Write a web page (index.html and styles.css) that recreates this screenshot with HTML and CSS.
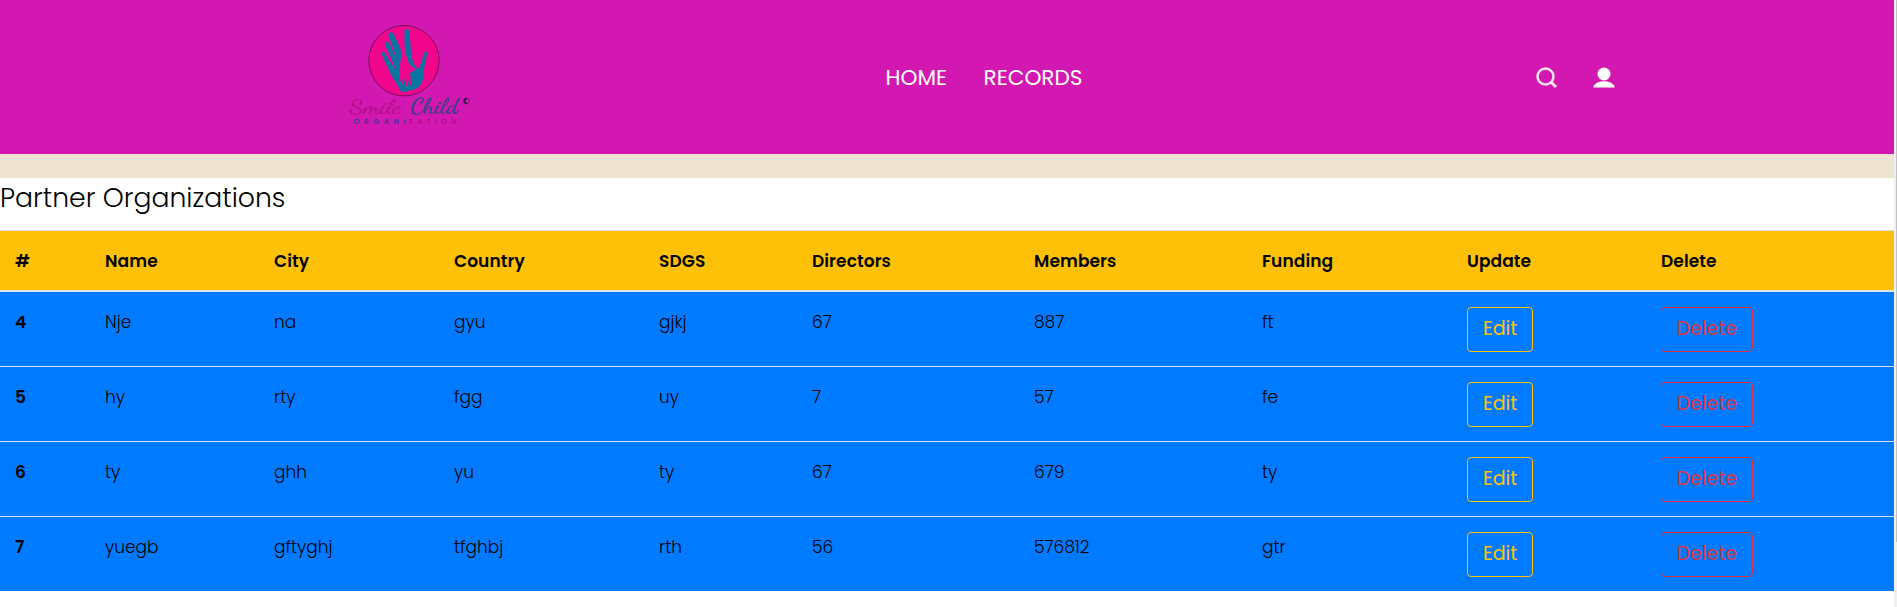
FILE: index.html
```html
<!DOCTYPE html>
<html lang="en">
<head>
<meta charset="utf-8">
<title>Partner Organizations</title>
<link rel="stylesheet" href="styles.css">
</head>
<body>
<div class="viewport">
<main class="page">
<header class="header">
  <a class="logo" href="#">
    <svg width="140" height="110" viewBox="340 15 140 110">
      <circle cx="404" cy="60.7" r="35.2" fill="#f0058c" stroke="#74105f" stroke-width="1"/>
      <path fill="#0676a0" d="M403.300 92.500Q400 91 398 86Q391 76 386.500 65Q383 57 381.300 53.500Q382 51 384.500 52.500Q388 59 392.500 65L396 70Q392 60 385 44.500Q384 42 386.500 41.500Q389 41.500 391 47L397.300 60.500Q394 50 388.500 36Q388 32.500 391 32.300Q393.500 33 395 37L400.300 48Q402 54 401 60L400 68L411 68.500Q406 58 404.700 48L404.400 32Q404.500 29 407 29Q409.500 29.500 409.700 33L410.700 50Q411.500 62 417.500 69.500Q421 66 423 56Q424.500 51 427 52Q427.500 53 425.500 61Q423.500 70 423.500 75Q423 86 415 89.500Q409 90 403.300 92.500Z"/>
      <path fill="#f0058c" d="M401.200 55L405.300 52Q407 61 411 65.500L416 69.500L410 73L411.200 85L409.500 85.500L407.800 78L407.500 86L405.700 86.500L405 78L403.800 84.500L402.300 84L402.300 77L400.200 81.500L398.500 81.500Q400 76 399.800 70Z"/>
      <g class="logo-script">
        <text x="349" y="113" fill="#b90f8c" textLength="52" lengthAdjust="spacingAndGlyphs">Smile</text>
        <text x="410" y="113" fill="#443d87" textLength="48" lengthAdjust="spacingAndGlyphs" class="logo-child">Child</text>
      </g>
      <circle cx="466.500" cy="101" r="3" fill="none" stroke="#851785"/>
      <path d="M467 98.500a2.500 2.500 0 0 0 0 5" fill="none" stroke="#321449" stroke-width="1.500"/>
      <text class="logo-caption" x="353.500" y="123.500" textLength="52" fill="#4b3297">ORGANI</text>
      <text class="logo-caption" x="408.500" y="123.500" textLength="48" fill="#b50d91">ZATION</text>
    </svg>
  </a>
  <nav class="nav"><a class="home" href="#">HOME</a><a class="records" href="#">RECORDS</a></nav>
  <div class="tools">
    <svg width="22" height="22" viewBox="0 0 22 22"><circle cx="9.500" cy="9.500" r="8" fill="none" stroke="#fae3f5" stroke-width="2.500"/><path d="M15 15l5 5" stroke="#fae3f5" stroke-width="3"/></svg>
    <svg width="22" height="22" viewBox="0 0 22 22"><circle cx="11" cy="7" r="6.500" fill="#fff"/><path d="M.5 20.500v-1.500Q3.500 14.300 11 14.300T21.500 19v1.500z" fill="#fff"/></svg>
  </div>
</header>
<div class="strip"></div>
<h1 class="title">Partner Organizations</h1>
<table class="table">
  <colgroup><col class="c0"><col class="c1"><col class="c2"><col class="c3"><col class="c4"><col class="c5"><col class="c6"><col class="c7"><col class="c8"><col class="c9"></colgroup>
  <thead><tr><th>#</th><th>Name</th><th>City</th><th>Country</th><th>SDGS</th><th>Directors</th><th>Members</th><th>Funding</th><th>Update</th><th>Delete</th></tr></thead>
  <tbody>
    <tr><th>4</th><td>Nje</td><td>na</td><td>gyu</td><td>gjkj</td><td>67</td><td>887</td><td>ft</td><td><button class="btn edit">Edit</button></td><td><button class="btn delete">Delete</button></td></tr>
    <tr><th>5</th><td>hy</td><td>rty</td><td>fgg</td><td>uy</td><td>7</td><td>57</td><td>fe</td><td><button class="btn edit">Edit</button></td><td><button class="btn delete">Delete</button></td></tr>
    <tr><th>6</th><td>ty</td><td>ghh</td><td>yu</td><td>ty</td><td>67</td><td>679</td><td>ty</td><td><button class="btn edit">Edit</button></td><td><button class="btn delete">Delete</button></td></tr>
    <tr><th>7</th><td>yuegb</td><td>gftyghj</td><td>tfghbj</td><td>rth</td><td>56</td><td>576812</td><td>gtr</td><td><button class="btn edit">Edit</button></td><td><button class="btn delete">Delete</button></td></tr>
  </tbody>
</table>
</main>
<div class="scrollbar"><div class="thumb"></div></div>
</div>
</body>
</html>
```
FILE: styles.css
```css
* { box-sizing: border-box; }
body { margin: 0; background: #fff; color: #000; font-family: Poppins, Inter, "Open Sans", sans-serif; font-weight: 300; overflow: hidden; }
.viewport { display: grid; grid-template-columns: 1894px 3px; height: 607px; }
.header { height: 154px; background: #d318b2; display: grid; grid-template-columns: 885.5px 650.5px 1fr; align-items: center; }
.logo { padding: 0 0 14px 340px; }
.logo svg { display: block; }
.logo-script { font: 700 19px "Brush Script MT", "Dancing Script", "Kaushan Script", Lato, cursive; }
.logo-child { font-size: 21px; }
.logo-caption { font: 600 7.5px Poppins, Lato, sans-serif; }
.nav { display: flex; font-size: 21.6px; font-weight: 400; line-height: 30px; padding-top: 1px; }
.nav a { color: #fff; text-decoration: none; }
.home { width: 98px; }
.tools { display: flex; gap: 35px; padding-top: 2px; }
.strip { height: 24px; background: #efe3d2; }
.title { margin: 0; height: 52px; padding-top: 4px; font-size: 26.7px; font-weight: 300; line-height: 32px; }
.table { width: 1894px; table-layout: fixed; border-spacing: 0; border-collapse: separate; font-size: 17px; line-height: 30px; }
.c0 { width: 90px; }
.c1 { width: 169px; }
.c2 { width: 180px; }
.c3 { width: 205px; }
.c4 { width: 153px; }
.c5 { width: 222px; }
.c6 { width: 228px; }
.c7 { width: 205px; }
.c8 { width: 194px; }
.c9 { width: 248px; }
.table th, .table td { padding: 15px 15px 0; text-align: left; vertical-align: top; }
.table th { font-weight: 600; letter-spacing: 0.1px; }
.table thead th { height: 62px; background: #ffc107; border-top: 1px solid #dee2e6; border-bottom: 2px solid #dee2e6; }
.table tbody tr { background: #007bff; }
.table tbody th, .table tbody td { height: 75px; border-top: 1px solid #dee2e6; }
.table tbody tr:first-child > * { height: 74px; border-top: 0; }
.btn { display: block; height: 45px; padding: 0 0 2px; border: 1px solid; border-radius: 4px; background: transparent; font: 400 19px/30px Poppins, Inter, "Open Sans", sans-serif; }
.edit { width: 66px; color: #ffc107; }
.delete { width: 92px; color: #dc3545; }
.scrollbar { background: #f1f1f1; display: flex; justify-content: flex-end; }
.thumb { width: 1px; height: 542px; background: #c1c1c1; }
```
